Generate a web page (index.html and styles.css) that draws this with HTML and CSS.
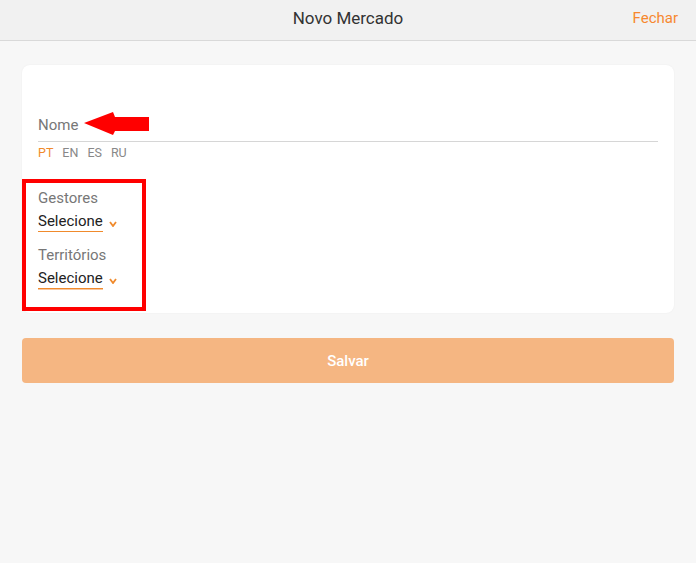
FILE: index.html
```html
<!DOCTYPE html>
<html lang="pt">
<head>
<meta charset="utf-8">
<title>Novo Mercado</title>
<link rel="stylesheet" href="styles.css">
</head>
<body>
<div class="corner-mark"></div>
<header class="topbar">
  <div class="topbar-title">Novo Mercado</div>
  <a class="topbar-close">Fechar</a>
</header>
<main class="page">
  <section class="card">
    <div class="name-field">
      <span class="name-label">Nome</span>
      <svg class="arrow" width="66" height="24" viewBox="0 0 66 24"><path d="M0 11 L29 0 L31 5 L65 5 L65 19 L31 19 L29 23 Z" fill="#ff0000"/></svg>
    </div>
    <div class="langs">
      <span class="lang active">PT</span>
      <span class="lang">EN</span>
      <span class="lang">ES</span>
      <span class="lang">RU</span>
    </div>
    <div class="selects">
      <div class="select-field">
        <div class="select-label">Gestores</div>
        <div class="select-row">
          <span class="select-value">Selecione</span>
          <svg class="chev" width="8" height="6" viewBox="0 0 8 6"><polyline points="1,1 4,5 7,1" fill="none" stroke="#f08a2c" stroke-width="1.8"/></svg>
        </div>
      </div>
      <div class="select-field">
        <div class="select-label">Territórios</div>
        <div class="select-row">
          <span class="select-value second">Selecione</span>
          <svg class="chev" width="8" height="6" viewBox="0 0 8 6"><polyline points="1,1 4,5 7,1" fill="none" stroke="#f08a2c" stroke-width="1.8"/></svg>
        </div>
      </div>
      <div class="highlight-box"></div>
    </div>
  </section>
  <button class="save-btn">Salvar</button>
</main>
</body>
</html>
```
FILE: styles.css
```css
* { box-sizing: border-box; }
html, body { margin: 0; padding: 0; }
body {
  background: #f7f7f7;
  font-family: Roboto, "Liberation Sans", sans-serif;
  width: 696px;
  height: 563px;
  position: relative;
  overflow: hidden;
}
.corner-mark {
  position: absolute;
  top: 0;
  right: 0;
  width: 4px;
  height: 2px;
  background: #ff0000;
}
.topbar {
  height: 41px;
  background: #f1f1f1;
  border-bottom: 1px solid #d9d9d9;
  display: flex;
  align-items: center;
  justify-content: center;
  position: relative;
}
.topbar-title {
  font-size: 17px;
  color: #333;
  margin-top: -4px;
}
.topbar-close {
  position: absolute;
  right: 18px;
  top: 9px;
  font-size: 15px;
  color: #f7882f;
}
.page {
  padding: 24px 22px 0;
}
.card {
  background: #fff;
  border-radius: 8px;
  height: 248px;
  padding: 50px 16px 0;
  box-shadow: 0 0 2px rgba(0,0,0,0.05);
}
.name-field {
  display: flex;
  align-items: center;
  height: 27px;
  padding-bottom: 7px;
  border-bottom: 1px solid #d6d6d6;
}
.name-label {
  font-size: 15px;
  line-height: 20px;
  color: #777;
}
.arrow {
  margin-left: 6px;
  margin-top: -2px;
}
.langs {
  display: flex;
  gap: 9px;
  font-size: 12.5px;
  line-height: 16px;
  margin-top: 3px;
  color: #888;
}
.lang.active { color: #f08a2c; }
.selects {
  position: relative;
  padding-top: 27px;
}
.select-field + .select-field { margin-top: 13px; }
.select-label {
  font-size: 15px;
  line-height: 20px;
  color: #777;
}
.select-row {
  display: flex;
  align-items: center;
  margin-top: 3px;
}
.select-value {
  font-size: 15px;
  line-height: 20px;
  color: #222;
  border-bottom: 1px solid #f08a2c;
}
.select-value.second {
  box-shadow: 0 1px 0 #f7c7a0;
}
.chev {
  margin-left: 6px;
  margin-top: 5px;
}
.highlight-box {
  position: absolute;
  left: -16px;
  top: 18px;
  width: 124px;
  height: 132px;
  border: 4px solid #ff0000;
}
.save-btn {
  display: block;
  width: 100%;
  height: 45px;
  margin-top: 25px;
  border: none;
  border-radius: 4px;
  background: #f5b682;
  color: #fff;
  font-family: Roboto, "Liberation Sans", sans-serif;
  font-size: 15px;
  font-weight: 500;
}
```
